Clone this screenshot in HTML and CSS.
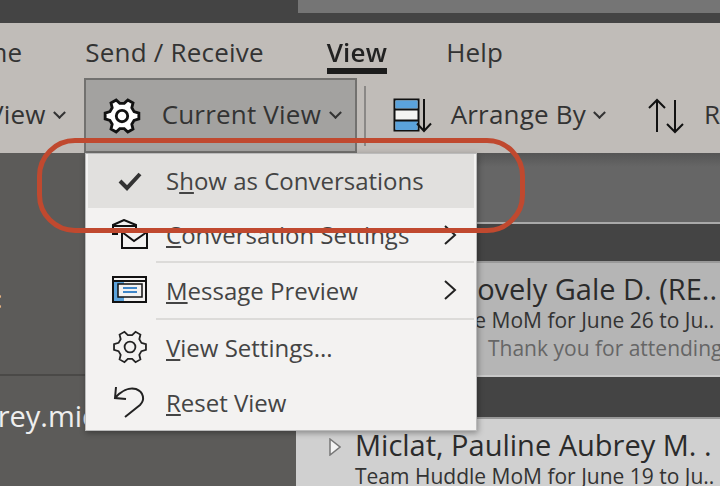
FILE: index.html
```html
<!DOCTYPE html>
<html lang="en">
<head>
    <meta charset="UTF-8">
    <title>Outlook - Current View</title>
    <link rel="stylesheet" href="styles.css">
</head>
<body>
    <svg class="defs" width="0" height="0">
        <symbol id="gear" viewBox="-20 -20 40 40">
            <polygon points="12.69,-4.62 17.73,-3.13 17.73,3.13 12.69,4.62 10.34,8.68 11.57,13.79 6.16,16.91 2.34,13.29 -2.34,13.29 -6.16,16.91 -11.57,13.79 -10.34,8.68 -12.69,4.62 -17.73,3.13 -17.73,-3.13 -12.69,-4.62 -10.34,-8.68 -11.57,-13.79 -6.16,-16.91 -2.34,-13.29 2.34,-13.29 6.16,-16.91 11.57,-13.79 10.34,-8.68"/>
            <circle r="6"/>
        </symbol>
    </svg>

    <div class="topbar"><div class="search"></div></div>

    <div class="ribbon">
        <nav class="tabs">
            <span class="tab tab-home">Home</span>
            <span class="tab tab-send">Send / Receive</span>
            <span class="tab tab-view">View</span>
            <span class="tab">Help</span>
        </nav>
        <div class="tools">
            <span class="tool tool-first"><span class="tool-text">View</span> <span class="chev"></span></span>
            <div class="tool-btn">
                <svg class="icon-gear" width="38" height="38"><use href="#gear"/></svg>
                <span class="tool-text">Current View</span>
                <span class="chev"></span>
            </div>
            <div class="divider"></div>
            <svg class="icon-arrange" width="40" height="36" viewBox="0 0 40 36">
                <rect x="1.5" y="1.5" width="24" height="31" fill="#f4f4f2" stroke="#111" stroke-width="2"/>
                <rect x="2.5" y="2.5" width="22" height="8" fill="#5ba3dc"/>
                <rect x="2.5" y="23" width="22" height="9" fill="#5ba3dc"/>
                <path d="M2 11.5H25M2 22.5H25" stroke="#111" stroke-width="2"/>
                <path d="M31 1V33M24 25.5L31 33L38 25.5" fill="none" stroke="#111" stroke-width="2"/>
            </svg>
            <span class="tool tool-arrange"><span class="tool-text">Arrange By</span> <span class="chev"></span></span>
            <svg class="icon-sort" width="38" height="36" viewBox="0 0 38 36">
                <path d="M10 34V2M2 10L10 2L18 10M28 2V34M20 26L28 34L36 26" fill="none" stroke="#111" stroke-width="2"/>
            </svg>
            <span class="tool"><span class="tool-text">Reverse</span></span>
        </div>
    </div>

    <div class="main">
        <aside class="sidebar">
            <div class="side-top"><span class="side-colon">:</span></div>
            <div class="side-mail">aubrey.miclat</div>
        </aside>
        <section class="list">
            <div class="list-head"></div>
            <div class="list-gap"></div>
            <div class="msg msg-selected">
                <div class="msg-from">Lovely Gale D. (RE..</div>
                <div class="msg-subject">Team Huddle MoM for June 26 to Ju..</div>
                <div class="msg-body">Thank you for attending</div>
            </div>
            <div class="list-gap list-gap-2"></div>
            <div class="msg">
                <div class="msg-from">
                    <svg class="arrow" width="12" height="18" viewBox="0 0 12 18"><polygon points="1,1 11,9 1,17" fill="#f4f4f4" stroke="#777" stroke-width="1.5"/></svg>
                    Miclat, Pauline Aubrey M. .
                </div>
                <div class="msg-subject">Team Huddle MoM for June 19 to Ju..</div>
            </div>
        </section>
    </div>

    <!-- menu do Current View -->
    <div class="menu">
        <div class="item item-active">
            <span class="item-icon">
                <svg width="26" height="22" viewBox="0 0 26 22"><path d="M3 11L10 18L23 4" fill="none" stroke="#333" stroke-width="4"/></svg>
            </span>
            <span>S<u>h</u>ow as Conversations</span>
        </div>
        <div class="item item-line">
            <span class="item-icon">
                <svg width="36" height="30" viewBox="0 0 36 30">
                    <path d="M1 12V6L12 1L24 6V12" fill="#f3f2f1" stroke="#111" stroke-width="2"/>
                    <path d="M1 7H24M1 12V15H6" fill="none" stroke="#111" stroke-width="2"/>
                    <rect x="10" y="13" width="25" height="16" fill="#f3f2f1" stroke="#111" stroke-width="2"/>
                    <path d="M10 13L22 22L35 13" fill="none" stroke="#111" stroke-width="2"/>
                </svg>
            </span>
            <span><u>C</u>onversation Settings</span>
            <svg class="item-next" width="14" height="22" viewBox="0 0 14 22"><path d="M2 2L12 11L2 20" fill="none" stroke="#222" stroke-width="2"/></svg>
        </div>
        <div class="item item-line item-tall">
            <span class="item-icon">
                <svg width="36" height="28" viewBox="0 0 36 28">
                    <rect x="1" y="1" width="33" height="25" fill="#f3f2f1" stroke="#111" stroke-width="2"/>
                    <path d="M1 5H34" stroke="#111" stroke-width="2"/>
                    <rect x="2" y="6" width="10" height="19" fill="#5ba3dc"/>
                    <rect x="6" y="8" width="24" height="13" fill="#f3f2f1" stroke="#111" stroke-width="1.5"/>
                    <path d="M11 12H25M11 16H25" stroke="#3f86c8" stroke-width="2"/>
                </svg>
            </span>
            <span><u>M</u>essage Preview</span>
            <svg class="item-next" width="14" height="22" viewBox="0 0 14 22"><path d="M2 2L12 11L2 20" fill="none" stroke="#222" stroke-width="2"/></svg>
        </div>
        <div class="item item-tall">
            <span class="item-icon">
                <svg class="icon-gear-line" width="36" height="36"><use href="#gear"/></svg>
            </span>
            <span><u>V</u>iew Settings...</span>
        </div>
        <div class="item item-last">
            <span class="item-icon">
                <svg width="36" height="32" viewBox="0 0 36 32">
                    <path d="M4 1L3 12L14 13M3 12C9 5 17 1 24 3C32 6 33 14 28 19L13 31" fill="none" stroke="#222" stroke-width="2"/>
                </svg>
            </span>
            <span><u>R</u>eset View</span>
        </div>
    </div>

    <!-- marcacao vermelha -->
    <div class="callout"></div>
</body>
</html>
```

FILE: styles.css
```css
* {
    box-sizing: border-box;
}
html, body {
    margin: 0;
    padding: 0;
}
body {
    position: relative;
    width: 720px;
    height: 486px;
    overflow: hidden;
    font-family: "Open Sans", "Noto Sans", sans-serif;
    background-color: #444;
    color: #333;
    filter: blur(0.4px);
}
.defs {
    position: absolute;
}
.topbar {
    height: 23px;
    background-color: #444;
    padding-left: 298px;
}
.search {
    height: 13px;
    background-color: #757575;
}
.ribbon {
    height: 130px;
    background-color: #c0bcb8;
    overflow: hidden;
}
.tabs {
    display: flex;
    align-items: flex-start;
    height: 55px;
    padding-top: 9px;
    font-size: 26px;
    letter-spacing: 0.2px;
    white-space: nowrap;
}
.tab {
    line-height: 40px;
}
.tab-home {
    margin-left: -52px;
    margin-right: 63px;
}
.tab-send {
    margin-right: 63px;
}
.tab-view {
    margin-right: 59px;
    font-weight: 600;
    color: #222;
    position: relative;
}
.tab-view::after {
    content: "";
    position: absolute;
    left: 0;
    right: 0;
    bottom: -2px;
    height: 6px;
    background-color: #1c1c1c;
}
.tools {
    display: flex;
    align-items: center;
    height: 75px;
    font-size: 26px;
    letter-spacing: 0.2px;
    white-space: nowrap;
}
.tool {
    display: flex;
    align-items: center;
    gap: 9px;
}
.tool-text {
    padding-bottom: 3px;
}
.tool-first {
    margin-left: -12px;
    margin-right: 20px;
}
.tool-btn {
    display: flex;
    align-items: center;
    flex: none;
    width: 273px;
    height: 75px;
    padding: 0 0 0 17px;
    background-color: #a3a2a0;
    border: 2px solid #72716f;
}
.icon-gear {
    fill: #fff;
    stroke: #111;
    stroke-width: 3;
    margin-right: 21px;
}
.tool-btn .chev {
    margin-left: 10px;
}
.chev {
    display: inline-block;
    width: 9px;
    height: 9px;
    border-right: 2px solid #333;
    border-bottom: 2px solid #333;
    transform: rotate(45deg) translate(-2px, -2px);
}
.divider {
    flex: none;
    width: 2px;
    height: 60px;
    margin: 0 27px 0 7px;
    background-color: #8a8886;
}
.icon-arrange {
    flex: none;
    margin-right: 18px;
}
.tool-arrange {
    margin-right: 43px;
}
.icon-sort {
    flex: none;
    margin-right: 19px;
}
.main {
    display: grid;
    grid-template-columns: 296px 1fr;
    height: 333px;
}
.sidebar {
    background-color: #5c5b59;
    overflow: hidden;
    white-space: nowrap;
}
.side-top {
    height: 223px;
    border-bottom: 2px solid #4a4947;
    padding-top: 131px;
    font-size: 24px;
    color: #eee;
}
.side-colon {
    display: block;
    line-height: 30px;
    margin-left: -4px;
}
.side-mail {
    margin-left: -54px;
    margin-top: 22px;
    font-size: 29px;
    line-height: 36px;
    color: #eee;
}
.list {
    background-color: #444;
    overflow: hidden;
    white-space: nowrap;
}
.list-head {
    height: 71px;
    background: linear-gradient(#555, #666 20%);
    border-bottom: 2px solid #a9a9a9;
}
.list-gap {
    height: 37px;
}
.list-gap-2 {
    height: 40px;
}
.msg {
    height: 116px;
    padding: 8px 0 0 59px;
    background-color: #d0d0d0;
    border-top: 2px solid #999;
}
.msg-selected {
    padding-left: 166px;
    background-color: #b5b5b5;
    border-bottom: 2px solid #c8c8c8;
}
.msg-from {
    position: relative;
    font-size: 29px;
    line-height: 36px;
    color: #2b2b2b;
}
.msg-subject {
    font-size: 21px;
    line-height: 26px;
    color: #333;
}
.msg-body {
    margin-left: 26px;
    margin-top: 2px;
    font-size: 21px;
    line-height: 27px;
    color: #666;
}
.msg-selected .msg-subject {
    margin-left: -107px;
}
.arrow {
    position: absolute;
    left: -26px;
    top: 11px;
}
.menu {
    position: absolute;
    left: 85px;
    top: 153px;
    width: 392px;
    height: 278px;
    padding: 0 2px;
    background-color: #f3f2f1;
    border: 1px solid #bbb;
    box-shadow: 1px 2px 6px rgba(0, 0, 0, 0.35);
    font-size: 24px;
    color: #444;
}
.item {
    position: relative;
    display: flex;
    align-items: center;
    height: 55px;
    padding-bottom: 3px;
    white-space: nowrap;
}
.item-active {
    height: 54px;
    padding-bottom: 1px;
    background-color: #e1e0de;
}
.item-tall {
    height: 57px;
}
.item-last {
    height: 53px;
}
.item-line::after {
    content: "";
    position: absolute;
    left: 68px;
    right: 0;
    bottom: 0;
    height: 2px;
    background-color: #dcdbd9;
}
.item-icon {
    display: flex;
    justify-content: center;
    flex: none;
    width: 78px;
    padding-left: 6px;
}
.item-next {
    position: absolute;
    right: 17px;
    top: 16px;
}
.icon-gear-line {
    fill: none;
    stroke: #222;
    stroke-width: 2;
}
.callout {
    position: absolute;
    left: 37px;
    top: 138px;
    width: 488px;
    height: 95px;
    border: 5px solid #c0492f;
    border-radius: 38px;
}
```
